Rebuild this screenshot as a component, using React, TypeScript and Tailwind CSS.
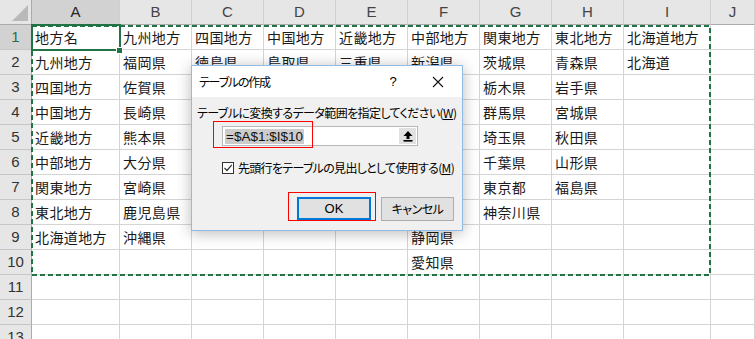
import React from 'react';

const cols = ['A', 'B', 'C', 'D', 'E', 'F', 'G', 'H', 'I', 'J'];
const widths = [88, 72, 72, 72, 72, 72, 72, 72, 87, 44];

const data: string[][] = [
  ['地方名', '九州地方', '四国地方', '中国地方', '近畿地方', '中部地方', '関東地方', '東北地方', '北海道地方', ''],
  ['九州地方', '福岡県', '徳島県', '鳥取県', '三重県', '新潟県', '茨城県', '青森県', '北海道', ''],
  ['四国地方', '佐賀県', '香川県', '島根県', '滋賀県', '富山県', '栃木県', '岩手県', '', ''],
  ['中国地方', '長崎県', '愛媛県', '岡山県', '京都府', '石川県', '群馬県', '宮城県', '', ''],
  ['近畿地方', '熊本県', '高知県', '広島県', '大阪府', '福井県', '埼玉県', '秋田県', '', ''],
  ['中部地方', '大分県', '', '山口県', '兵庫県', '山梨県', '千葉県', '山形県', '', ''],
  ['関東地方', '宮崎県', '', '', '奈良県', '長野県', '東京都', '福島県', '', ''],
  ['東北地方', '鹿児島県', '', '', '和歌山県', '岐阜県', '神奈川県', '', '', ''],
  ['北海道地方', '沖縄県', '', '', '', '静岡県', '', '', '', ''],
  ['', '', '', '', '', '愛知県', '', '', '', ''],
  ['', '', '', '', '', '', '', '', '', ''],
  ['', '', '', '', '', '', '', '', '', ''],
  ['', '', '', '', '', '', '', '', '', ''],
];

const cellFont = { fontFamily: '"Noto Sans CJK JP", "Noto Sans", sans-serif' };
const uiFont = { fontFamily: '"Noto Sans CJK JP", "Noto Sans", sans-serif', fontFeatureSettings: "'palt'" };
const numFont = { fontFamily: '"Liberation Sans", Arial, sans-serif' };

function Sheet() {
  return (
    <div
      className="grid bg-white"
      style={{ gridTemplateColumns: `32px ${widths.map((w) => w + 'px').join(' ')}`, gridAutoRows: '25px' }}
    >
      <div className="relative bg-[#e6e6e6] border-r border-b border-[#ababab]">
        <div className="absolute right-[3px] bottom-[3px] w-0 h-0 border-l-[16px] border-l-transparent border-b-[16px] border-b-[#b9b9b9]" />
      </div>
      {cols.map((c, i) => (
        <div
          key={c}
          style={numFont}
          className={
            'flex items-center justify-center text-[15px] text-[#444] border-r border-b border-r-[#d0d0d0] border-b-[#ababab] ' +
            (i === 0 ? 'bg-[#d2d2d2] text-[#262626]' : 'bg-[#e6e6e6]')
          }
        >
          {c}
        </div>
      ))}
      {data.map((row, r) => (
        <React.Fragment key={r}>
          <div
            style={numFont}
            className={
              'flex items-center justify-center text-[15px] border-r border-b border-r-[#ababab] border-b-[#c6c6c6] ' +
              (r === 0 ? 'bg-[#d2d2d2] text-[#217346]' : 'bg-[#e6e6e6] text-[#333]')
            }
          >
            {r + 1}
          </div>
          {row.map((v, c) => (
            <div
              key={c}
              style={cellFont}
              className="flex items-center pl-[3px] pt-[1px] text-[14px] tracking-[0.4px] text-[#1a1a1a] whitespace-nowrap overflow-hidden border-r border-b border-[#d4d4d4]"
            >
              {v}
            </div>
          ))}
        </React.Fragment>
      ))}
    </div>
  );
}

function UploadIcon() {
  return (
    <svg width="12" height="12" viewBox="0 0 12 12">
      <path d="M6 1 L10.5 6 L7.5 6 L7.5 9 L4.5 9 L4.5 6 L1.5 6 Z" fill="#000" />
      <rect x="1.5" y="10" width="9" height="1.6" fill="#000" />
    </svg>
  );
}

function Dialog() {
  return (
    <div
      style={uiFont}
      className="absolute left-[191px] top-[65px] w-[272px] h-[166px] bg-[#f0f0f0] border border-[#8fbbe6] shadow-[0_2px_14px_rgba(0,0,0,0.28)] flex flex-col text-[12px] text-black"
    >
      <div className="h-[31px] bg-white flex items-center pl-[7px] shrink-0">
        <span className="flex-1 text-[12px] tracking-[-1.2px]">テーブルの作成</span>
        <span className="w-[12px] text-center text-[13px] mr-[33px]" style={numFont}>?</span>
        <svg width="12" height="12" viewBox="0 0 12 12" className="mr-[18px]">
          <path d="M1 1 L11 11 M11 1 L1 11" stroke="#111" strokeWidth="1.1" />
        </svg>
      </div>
      <div className="flex flex-col pl-[5px] pt-[8px]">
        <div className="leading-[16px] whitespace-nowrap tracking-[-0.6px]">
          テーブルに変換するデータ範囲を指定してください(<span className="underline">W</span>)
        </div>
        <div className="ml-[25px] mt-[5px] w-[196px] h-[20px] bg-white border border-[#b8b8b8] flex items-center">
          <span style={numFont} className="ml-[2px] bg-[#cccccc] text-[13.5px] leading-[15px] px-[1px] text-[#111]">
            =$A$1:$I$10
          </span>
          <span className="ml-auto mr-[1px] w-[17px] h-[16px] bg-[#e1e1e1] flex items-center justify-center">
            <UploadIcon />
          </span>
        </div>
        <div className="ml-[25px] mt-[15px] flex items-center h-[14px]">
          <span className="w-[12px] h-[12px] border border-[#333] bg-white flex items-center justify-center">
            <svg width="10" height="10" viewBox="0 0 10 10">
              <path d="M1.5 5 L4 7.5 L8.8 1.8" fill="none" stroke="#333" strokeWidth="1.2" />
            </svg>
          </span>
          <span className="ml-[4px] whitespace-nowrap text-[12px] tracking-[-0.7px]">
            先頭行をテーブルの見出しとして使用する(<span className="underline">M</span>)
          </span>
        </div>
        <div className="mt-[22px] flex justify-end pr-[8px] gap-[10px]">
          <div style={numFont} className="w-[74px] h-[23px] bg-[#e1e1e1] border-2 border-[#0078d7] flex items-center justify-center text-[13px]">
            OK
          </div>
          <div className="w-[73px] h-[24px] bg-[#e1e1e1] border border-[#adadad] flex items-center justify-center text-[12px] tracking-[-0.5px]">
            キャンセル
          </div>
        </div>
      </div>
      <div className="absolute left-[21px] top-[55px] w-[100px] h-[27px] border border-[#ff0000]" />
      <div className="absolute left-[96px] top-[126px] w-[88px] h-[29px] border border-[#ff0000]" />
    </div>
  );
}

export default function App() {
  return (
    <div className="relative w-[755px] h-[339px] overflow-hidden bg-white">
      <Sheet />
      {/* marching ants around A1:I10 */}
      <svg className="absolute left-0 top-0 pointer-events-none" width="755" height="339">
        <rect x="32" y="26" width="678" height="249" fill="none" stroke="#217346" strokeWidth="2" strokeDasharray="5 3" />
      </svg>
      {/* active cell A1 */}
      <div className="absolute left-[31px] top-[24px] w-[90px] h-[27px] border-2 border-[#217346]" />
      <div className="absolute left-[116px] top-[47px] w-[7px] h-[7px] bg-[#217346] border border-white" />
      <Dialog />
    </div>
  );
}
